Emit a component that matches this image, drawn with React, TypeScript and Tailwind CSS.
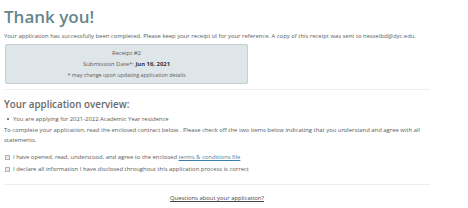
export default function App() {
  return (
    <div className="w-[468px] h-[208px] bg-white overflow-hidden px-[4px] pt-[7px] text-[#5a5a5a] font-['Open_Sans',sans-serif]">
      <h1 className="text-[17px] font-semibold leading-[20px] text-[#66868d]">Thank you!</h1>
      <p className="mt-[4px] text-[5.9px] leading-[10px] whitespace-nowrap">
        Your application has successfully been completed. Please keep your receipt id for your reference. A copy of this receipt was sent to nesselbd@dyc.edu.
      </p>
      <div className="mt-[3px] ml-[1px] w-[243px] h-[40px] border border-[#c5cdd1] bg-[#dfe6e9] rounded-[2px] flex flex-col items-center justify-center text-[5.9px] leading-[11px]">
        <span>Receipt #2</span>
        <span>
          Submission Date*: <b className="font-bold text-[#333]">Jun 16, 2021</b>
        </span>
        <span className="text-[5.3px]">* may change upon updating application details</span>
      </div>
      <div className="mt-[5px] w-[426px] border-t border-[#eee]" />
      <h2 className="mt-[8px] text-[9.8px] font-semibold leading-[13px] text-[#6a6a6a]">Your application overview:</h2>
      <div className="mt-[3px] flex items-center gap-[4px] pl-[3px] text-[5.9px] leading-[10px]">
        <span className="w-[2px] h-[2px] rounded-full bg-[#555]" />
        <span>You are applying for 2021-2022 Academic Year residence</span>
      </div>
      <p className="mt-[1px] w-[426px] text-[5.9px] leading-[10px]">
        To complete your application, read the enclosed contract below . Please check off the two items below indicating that you understand and agree with all statements.
      </p>
      <div className="mt-[7px] ml-[1px] flex flex-col gap-[2px] text-[5.9px] leading-[10px]">
        <label className="flex items-center gap-[3px]">
          <span className="w-[5px] h-[5px] border border-[#b5b5b5] bg-[#e8e8e8]" />
          <span>
            I have opened, read, understood, and agree to the enclosed{" "}
            <a className="underline text-[#3a7fb0]">terms &amp; conditions file</a>
          </span>
        </label>
        <label className="flex items-center gap-[3px]">
          <span className="w-[5px] h-[5px] border border-[#b5b5b5] bg-[#e8e8e8]" />
          <span>I declare all information I have disclosed throughout this application process is correct</span>
        </label>
      </div>
      <div className="mt-[10px] w-[426px] border-t border-[#eee]" />
      <div className="mt-[8px] w-[426px] text-center text-[5.9px] leading-[10px]">
        <a className="underline text-[#444]">Questions about your application?</a>
      </div>
    </div>
  );
}
